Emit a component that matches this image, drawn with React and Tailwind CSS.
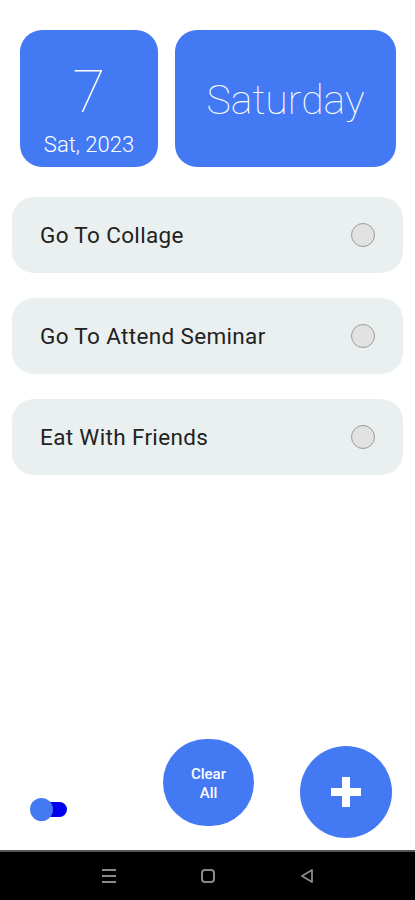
import React, { useState } from "react";

const tasks = ["Go To Collage", "Go To Attend Seminar", "Eat With Friends"];

const App = () => {
  const [done, setDone] = useState({});

  return (
    <div className="min-h-[900px] h-[900px] flex flex-col bg-white font-['Roboto',sans-serif]">
      {/* date cards */}
      <div className="flex gap-[17px] pt-[30px] pl-[20px]">
        <div className="w-[138px] h-[137px] rounded-[22px] bg-[#4479f4] flex flex-col items-center text-white">
          <span className="mt-[26px] text-[60px] leading-[72px] font-thin">7</span>
          <span className="mt-[4px] text-[22px] leading-[26px] font-light">Sat, 2023</span>
        </div>
        <div className="w-[221px] h-[137px] rounded-[22px] bg-[#4479f4] flex items-center justify-center text-white">
          <span className="text-[41px] font-thin pt-[4px]">Saturday</span>
        </div>
      </div>

      {/* tasks */}
      <div className="flex flex-col gap-[25px] mt-[30px] px-[12px]">
        {tasks.map((t, i) => (
          <div
            key={t}
            className="h-[76px] rounded-[22px] bg-[#eaf0ef] flex items-center justify-between pl-[28px] pr-[28px]"
          >
            <span className="text-[22.5px] text-[#222222] tracking-[0.35px] pt-[2px]">{t}</span>
            <button
              onClick={() => setDone((d) => ({ ...d, [i]: !d[i] }))}
              className={
                "w-[24px] h-[24px] rounded-full border-[1.5px] border-[#9a9a9a] " +
                (done[i] ? "bg-[#4479f4]" : "bg-[#e2e2e2]")
              }
            />
          </div>
        ))}
      </div>

      <div className="flex-1" />

      {/* bottom controls */}
      <div className="flex items-end">
        <div className="relative ml-[30px] mb-[29px] w-[37px] h-[23px]">
          <div className="absolute left-[14px] top-[4px] w-[23px] h-[15px] rounded-full bg-[#0000ee]" />
          <div className="absolute left-0 top-0 w-[23px] h-[23px] rounded-full bg-[#4479f4]" />
        </div>
        <button className="ml-[96px] mb-[24px] w-[91px] h-[87px] rounded-full bg-[#4479f4] text-white text-[15px] leading-[19px] font-medium pt-[2px]">
          Clear
          <br />
          All
        </button>
        <button className="ml-[46px] mb-[12px] w-[92px] h-[92px] rounded-full bg-[#4479f4] flex items-center justify-center">
          <svg width="30" height="30" viewBox="0 0 30 30">
            <rect x="11" y="0" width="8" height="30" fill="white" />
            <rect x="0" y="11" width="30" height="8" fill="white" />
          </svg>
        </button>
      </div>

      {/* system nav */}
      <div className="h-[50px] bg-black border-t-[2px] border-[#555555] flex items-center">
        <svg className="ml-[100px]" width="18" height="16" viewBox="0 0 18 16">
          <g stroke="#8a8a8a" strokeWidth="2">
            <line x1="2" y1="2" x2="16" y2="2" />
            <line x1="2" y1="8" x2="16" y2="8" />
            <line x1="2" y1="14" x2="16" y2="14" />
          </g>
        </svg>
        <svg className="ml-[82px]" width="16" height="16" viewBox="0 0 16 16">
          <rect x="2" y="2" width="12" height="12" rx="3" fill="none" stroke="#8a8a8a" strokeWidth="2" />
        </svg>
        <svg className="ml-[83px]" width="16" height="16" viewBox="0 0 16 16">
          <path d="M13 2 L3 8 L13 14 Z" fill="none" stroke="#8a8a8a" strokeWidth="1.8" strokeLinejoin="round" />
        </svg>
      </div>
    </div>
  );
};

export default App;
